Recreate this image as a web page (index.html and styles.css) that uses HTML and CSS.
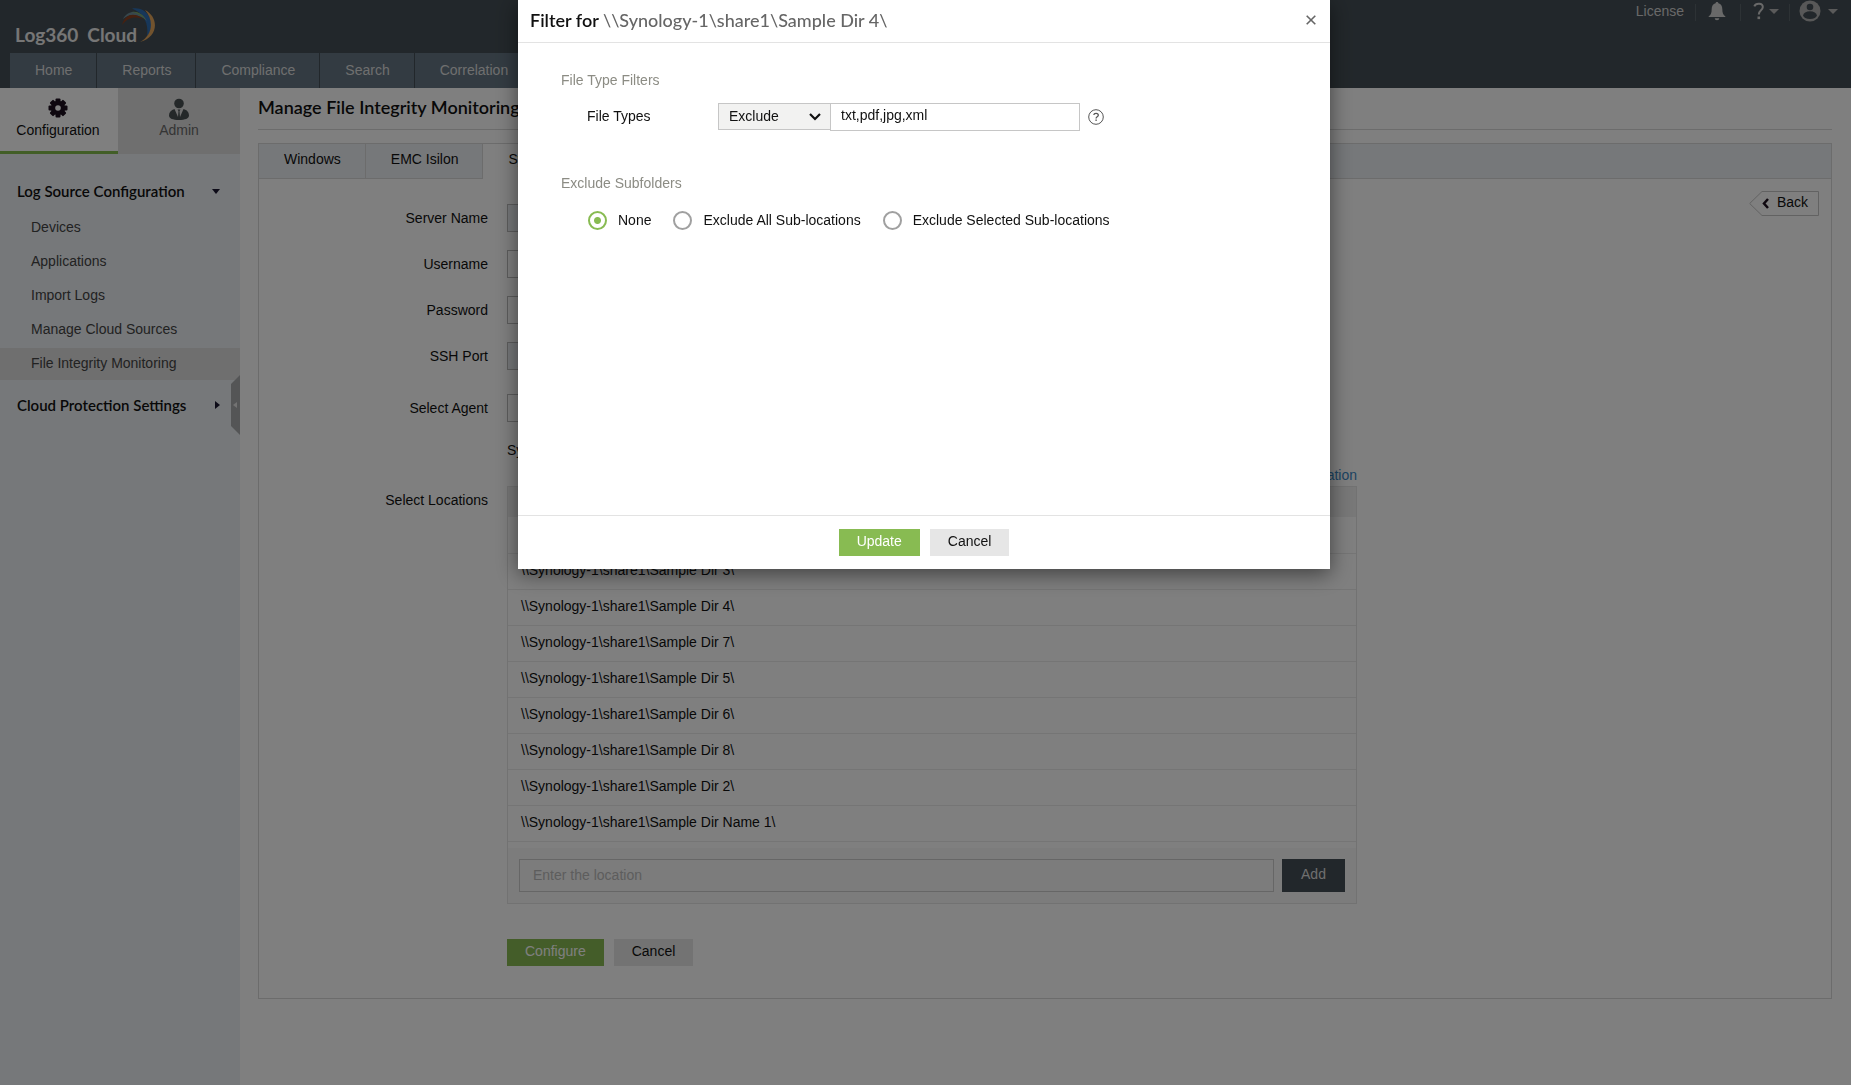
FILE: index.html
```html
<!DOCTYPE html>
<html lang="en">
<head>
<meta charset="utf-8">
<title>Log360 Cloud - Manage File Integrity Monitoring</title>
<link rel="stylesheet" href="styles.css">
</head>
<body>
<header class="header">
  <div class="header-top">
    <a class="logo" href="#" aria-label="Log360 Cloud">
      <span>Log360</span><span>Cloud</span>
      <svg class="logo-arc" width="36" height="36" viewBox="0 0 36 36" fill="none">
        <path d="M11 0.500C20 -1 27 4 30 12C31 20 29 25 26 28C28 14 22 5 11 0.500Z" fill="#2f6fb4"/>
        <path d="M2 11C7 2 18 1 26 13C18 6 9 5 2 11Z" fill="#6f8f9a"/>
        <path d="M11 4C16 3 22 6 25 12C21 8 17 5 11 4Z" fill="#7fae6a"/>
        <path d="M1 17C4 5 14 4 22 11C14 8 7 9 1 17Z" fill="#8c4020"/>
        <path d="M24 2C38 9 38 29 19 34C32 27 33 12 24 2Z" fill="#e5a65c"/>
      </svg>
    </a>
    <div class="header-tools">
      <a class="license" href="#">License</a>
      <button class="tool tool-bell" aria-label="Notifications">
        <svg width="18" height="20" viewBox="0 0 18 20" fill="#d2d2d2"><path d="M9 1c.8 0 1.3.5 1.4 1.2C13 2.8 14.300 5 14.300 8c0 4 1 6 3 7.200V16H.7v-.8C2.700 14 3.700 12 3.700 8c0-3 1.300-5.200 3.900-5.800C7.700 1.500 8.200 1 9 1zM6.700 17.200h4.600a2.300 2 0 0 1-4.600 0z"/></svg>
      </button>
      <button class="tool tool-help" aria-label="Help">
        <svg width="12" height="18" viewBox="0 0 12 18"><path d="M1.300 4.300C2.800.8 9.800.7 9.800 5c0 3.300-4 3.200-4 7.500" fill="none" stroke="#d2d2d2" stroke-width="2"/><rect x="4.500" y="14.500" width="2.600" height="2.600" fill="#d2d2d2"/></svg>
        <span class="caret"></span>
      </button>
      <button class="tool tool-user" aria-label="Account">
        <svg width="22" height="22" viewBox="0 0 22 22"><circle cx="11" cy="11" r="10.500" fill="#b0b0b0"/><circle cx="11" cy="7" r="3.300" fill="#454f56"/><ellipse cx="11" cy="15.200" rx="6.800" ry="3.900" fill="#454f56"/></svg>
        <span class="caret"></span>
      </button>
    </div>
  </div>
  <nav class="nav">
    <a href="#">Home</a><a href="#">Reports</a><a href="#">Compliance</a><a href="#">Search</a><a href="#">Correlation</a>
  </nav>
</header>

<div class="page">
  <aside class="sidebar">
    <div class="side-tabs">
      <a class="side-tab side-tab-active" href="#">
        <svg width="20" height="20" viewBox="0 0 20 20"><g fill="#1c0f1e"><rect x="7.500" y="0.500" width="5" height="19" rx="1"/><rect x="7.500" y="0.500" width="5" height="19" rx="1" transform="rotate(45 10 10)"/><rect x="7.500" y="0.500" width="5" height="19" rx="1" transform="rotate(90 10 10)"/><rect x="7.500" y="0.500" width="5" height="19" rx="1" transform="rotate(135 10 10)"/><circle cx="10" cy="10" r="7.200"/></g><circle cx="10" cy="10" r="2.800" fill="#fff"/></svg>
        <span>Configuration</span>
      </a>
      <a class="side-tab" href="#">
        <svg width="20" height="22" viewBox="0 0 20 22" fill="#485052"><circle cx="10" cy="5.500" r="4.800"/><path d="M5.500 11L9 19l.5-6-1-1.500h3l-1 1.500.5 6 3.500-8c3.500.8 5.500 3.500 5.500 6.500 0 3-4 4.500-10 4.500S0 20.500 0 17.500C0 14.500 2 11.800 5.500 11z"/></svg>
        <span>Admin</span>
      </a>
    </div>
    <nav class="side-nav">
      <button class="side-group">Log Source Configuration <span class="tri tri-down"></span></button>
      <ul class="side-list">
        <li><a href="#">Devices</a></li>
        <li><a href="#">Applications</a></li>
        <li><a href="#">Import Logs</a></li>
        <li><a href="#">Manage Cloud Sources</a></li>
        <li><a class="current" href="#">File Integrity Monitoring</a></li>
      </ul>
      <button class="side-group">Cloud Protection Settings <span class="tri tri-right"></span></button>
    </nav>
    <button class="collapse" aria-label="Collapse sidebar"><svg width="4" height="6" viewBox="0 0 4 6"><path d="M4 0v6L0 3z" fill="#e6e6e6"/></svg></button>
  </aside>

  <main class="main">
    <h1 class="title">Manage File Integrity Monitoring</h1>
    <section class="panel">
      <div class="tabs">
        <a href="#">Windows</a><a href="#">EMC Isilon</a><a class="tab-active" href="#">Synology</a><span class="tabs-rest"></span>
      </div>
      <a class="back" href="#">
        <svg class="back-shape" width="70" height="25" viewBox="0 0 70 25"><path d="M.7 12.500L13 .5h56.500v24H13z" fill="none" stroke="#c4c4c4"/><path d="M19 8l-4 4.500 4 4.500" fill="none" stroke="#1c0f1e" stroke-width="2.500"/></svg>
        <span>Back</span>
      </a>
      <form class="form">
        <label for="server">Server Name</label><input class="field" id="server" type="text" disabled>
        <label for="user">Username</label><input class="field" id="user" type="text">
        <label for="pass">Password</label><input class="field" id="pass" type="password">
        <label for="port">SSH Port</label><input class="field" id="port" type="text" disabled>
        <label for="agent">Select Agent</label><input class="field" id="agent" type="text">
        <p class="hint">Synology</p>
        <label class="loc-label" for="location">Select Locations</label>
        <div class="loc-column">
          <a class="add-link" href="#">Add Location</a>
          <div class="locations">
            <table class="loc-table">
              <thead><tr><th></th></tr></thead>
              <tbody>
                <tr><td></td></tr>
                <tr><td>\\Synology-1\share1\Sample Dir 3\</td></tr>
                <tr><td>\\Synology-1\share1\Sample Dir 4\</td></tr>
                <tr><td>\\Synology-1\share1\Sample Dir 7\</td></tr>
                <tr><td>\\Synology-1\share1\Sample Dir 5\</td></tr>
                <tr><td>\\Synology-1\share1\Sample Dir 6\</td></tr>
                <tr><td>\\Synology-1\share1\Sample Dir 8\</td></tr>
                <tr><td>\\Synology-1\share1\Sample Dir 2\</td></tr>
                <tr><td>\\Synology-1\share1\Sample Dir Name 1\</td></tr>
              </tbody>
            </table>
            <div class="loc-add">
              <input id="location" type="text" placeholder="Enter the location">
              <button type="button">Add</button>
            </div>
          </div>
        </div>
        <div class="actions">
          <button class="btn btn-primary" type="button">Configure</button>
          <button class="btn" type="button">Cancel</button>
        </div>
      </form>
    </section>
  </main>
</div>

<div class="overlay">
  <div class="modal" role="dialog" aria-labelledby="modal-title">
    <div class="modal-head">
      <h2 id="modal-title">Filter for <span>\\Synology-1\share1\Sample Dir 4\</span></h2>
      <button class="close" aria-label="Close"><svg width="10" height="10" viewBox="0 0 10 10"><path d="M.7.7l8.600 8.600M9.300.7L.7 9.300" stroke="#666" stroke-width="1.600"/></svg></button>
    </div>
    <div class="modal-body">
      <h3>File Type Filters</h3>
      <div class="type-row">
        <label for="types">File Types</label>
        <div class="select">
          <select aria-label="Filter mode"><option>Exclude</option><option>Include</option></select>
          <svg width="12" height="8" viewBox="0 0 12 8"><path d="M1 1l5 5 5-5" fill="none" stroke="#111" stroke-width="2.200"/></svg>
        </div>
        <input id="types" type="text" value="txt,pdf,jpg,xml">
        <svg class="help" width="16" height="16" viewBox="0 0 16 16"><circle cx="8" cy="8" r="7.300" fill="none" stroke="#555"/><path d="M5.800 6C6 3.800 10.300 3.800 10.300 6.200c0 1.700-2.200 1.500-2.200 3.300" fill="none" stroke="#555" stroke-width="1.300"/><rect x="7.400" y="10.500" width="1.400" height="1.400" fill="#555"/></svg>
      </div>
      <h3>Exclude Subfolders</h3>
      <div class="radios">
        <label><input type="radio" name="sub" checked>None</label>
        <label><input type="radio" name="sub">Exclude All Sub-locations</label>
        <label><input type="radio" name="sub">Exclude Selected Sub-locations</label>
      </div>
    </div>
    <div class="modal-foot">
      <button class="btn btn-primary">Update</button>
      <button class="btn">Cancel</button>
    </div>
  </div>
</div>
</body>
</html>
```
FILE: styles.css
```css
* { box-sizing: border-box; }

body {
  margin: 0;
  min-height: 100vh;
  display: flex;
  flex-direction: column;
  background: #fff;
  color: #111;
  font: 14px/20px "Liberation Sans", Arial, sans-serif;
}

a { color: inherit; text-decoration: none; }

button, input, select {
  font: inherit;
  color: inherit;
  border: 0;
  border-radius: 0;
  padding: 0;
  margin: 0;
  background: none;
}

h1, h2, h3, p, ul { margin: 0; padding: 0; }
h1, h2, .side-group, .logo { font-family: Lato, sans-serif; }

/* Header */
.header { background: #454f56; }
.header-top { display: flex; justify-content: space-between; height: 53px; }

.logo {
  position: relative;
  display: flex;
  gap: 9px;
  padding: 23px 20px 0 15px;
  color: #ececec;
  font-size: 19px;
  line-height: 24px;
  font-weight: 700;
}
.logo-arc { position: absolute; right: 0; top: 8px; }

.header-tools { display: flex; height: 22px; padding-right: 13px; color: #d2d2d2; }
.license { padding: 1px 11px 0 0; }
.tool {
  display: flex;
  align-items: center;
  gap: 4px;
  position: relative;
  padding: 0 14px 0 13px;
}
.tool::before {
  content: "";
  position: absolute;
  left: 0;
  top: 4px;
  width: 1px;
  height: 17px;
  background: #5b656b;
}
.tool-help { padding-right: 10px; }
.tool-user { padding: 0 0 0 10px; gap: 7px; }
.caret {
  border: 5px solid transparent;
  border-top-color: #b4b4b4;
  border-bottom: 0;
}

.nav { display: flex; padding-left: 10px; }
.nav a {
  padding: 7px 24px 8px 25px;
  background: #667785;
  color: #dedede;
  margin-right: 1px;
}

/* Sidebar */
.page { display: flex; flex: 1; }
.sidebar { position: relative; width: 240px; flex: none; background: #ecf0f4; }
.side-tabs { display: flex; height: 66px; }
.side-tab {
  flex: 1;
  display: flex;
  flex-direction: column;
  align-items: center;
  justify-content: space-between;
  padding: 10px 0 14px;
  background: #dedede;
  color: #6a6a6a;
}
.side-tab-active {
  flex: 0 0 118px;
  padding: 10px 2px 11px 0;
  background: #fff;
  color: #111;
  border-bottom: 3px solid #84bc4f;
}
.side-nav { padding-top: 23px; }
.side-group {
  display: flex;
  align-items: center;
  justify-content: space-between;
  width: 100%;
  height: 28px;
  padding: 0 20px 0 17px;
  font-size: 15px;
  font-weight: 600;
}
.tri { border: 4px solid transparent; }
.tri-down { border-top: 5px solid #1b1730; border-bottom: 0; }
.tri-right { border-left: 5px solid #1b1730; border-right: 0; }
.side-list {
  list-style: none;
  display: grid;
  gap: 2px;
  padding: 7px 0 11px;
  color: #444;
}
.side-list a { display: block; padding: 5px 31px 7px; }
.side-list .current { background: #dedede; }
.collapse {
  position: absolute;
  right: 0;
  top: 287px;
  width: 9px;
  height: 60px;
  background: #a9abad;
  clip-path: polygon(0 9px, 100% 0, 100% 100%, 0 51px);
  display: grid;
  place-items: center end;
  padding-right: 3px;
}

/* Main */
.main { flex: 1; padding: 0 19px 40px 18px; }
.title {
  padding: 7px 0 10px;
  border-bottom: 1px solid #d8d8d8;
  font-size: 18px;
  line-height: 24px;
  font-weight: 600;
}
.panel { position: relative; margin-top: 13px; border: 1px solid #d8d8d8; }
.tabs { display: flex; }
.tabs a, .tabs-rest {
  padding: 5px 24px 9px 25px;
  background: #ecf0f4;
  border-right: 1px solid #d8d8d8;
  border-bottom: 1px solid #d8d8d8;
}
.tabs .tab-active { background: #fff; border-bottom-color: #fff; }
.tabs-rest { flex: 1; border-right: 0; }
.back {
  position: absolute;
  right: 12px;
  top: 47px;
  width: 70px;
  padding: 1px 11px 3px 28px;
}
.back-shape { position: absolute; left: 0; top: 0; }

.form {
  display: grid;
  grid-template-columns: 229px 850px;
  column-gap: 19px;
  row-gap: 18px;
  align-items: center;
  padding: 25px 0 32px;
}
.form > label { text-align: right; }
.field { width: 380px; height: 28px; border: 1px solid #bbb; padding: 0 10px; }
.field:disabled { background: #ecf0f4; }
.form > label[for="agent"], #agent { margin-top: 6px; }
.hint { grid-column: 2; }
.form > .loc-label { align-self: start; margin-top: 12px; }
.loc-column { margin-top: -13px; }
.add-link { display: block; width: fit-content; margin: 0 0 1px auto; color: #3a86c4; }
.locations { border: 1px solid #e4e4e4; }
.loc-table { width: 100%; border-collapse: collapse; margin-bottom: 6px; }
.loc-table th { height: 30px; padding: 0; background: #f0f0f0; }
.loc-table td { height: 36px; padding: 0 13px 2px; border-bottom: 1px solid #ebebeb; }
.loc-add { display: flex; gap: 8px; padding: 11px; background: #f8f8f8; }
.loc-add input { flex: 1; height: 33px; padding: 0 13px; border: 1px solid #ccc; }
.loc-add input::placeholder { color: #bbb; opacity: 1; }
.loc-add button { width: 63px; padding-bottom: 3px; background: #454f56; color: #dedede; }
.actions { grid-column: 2; display: flex; gap: 10px; padding-top: 17px; }

.btn { height: 27px; padding: 0 18px 3px; background: #e6e6e6; }
.btn-primary { background: #88bb52; color: #fff; }

/* Dialog */
.overlay {
  position: fixed;
  inset: 0;
  display: flex;
  justify-content: center;
  align-items: flex-start;
  padding-right: 3px;
  background: rgba(0, 0, 0, .5);
}
.modal { width: 812px; background: #fff; box-shadow: 0 5px 20px rgba(0, 0, 0, .5); }
.modal-head {
  display: flex;
  align-items: center;
  justify-content: space-between;
  height: 43px;
  padding: 0 14px 3px 12px;
  border-bottom: 1px solid #e3e3e3;
}
.modal-head h2 { font-size: 18px; line-height: 24px; font-weight: 600; }
.modal-head span { color: #666; font-weight: 500; }
.close { display: flex; }
.modal-body { min-height: 472px; padding: 27px 43px; }
.modal-body h3 { color: #8c8c84; font-size: 14px; font-weight: 400; }
.type-row { display: flex; align-items: flex-start; padding: 13px 0 42px 26px; }
.type-row label { width: 131px; padding-top: 3px; }
.select { position: relative; width: 112px; }
.select select {
  appearance: none;
  width: 100%;
  height: 27px;
  padding: 0 30px 1px 10px;
  border: 1px solid #c6c6c6;
  border-right: 0;
  background: #f2f2f1;
}
.select svg { position: absolute; right: 9px; top: 10px; }
.type-row input { width: 250px; height: 28px; padding: 0 10px 4px; border: 1px solid #c6c6c6; }
.help { margin: 6px 0 0 8px; }
.radios { display: flex; gap: 22px; padding: 17px 0 0 27px; }
.radios label { display: flex; align-items: center; gap: 11px; }
.radios input {
  appearance: none;
  width: 19px;
  height: 19px;
  border: 2px solid #a0a0a0;
  border-radius: 50%;
}
.radios input:checked {
  border-color: #88bb52;
  background: radial-gradient(circle, #88bb52 3px, transparent 4px);
}
.modal-foot {
  display: flex;
  justify-content: center;
  gap: 10px;
  padding: 13px 0;
  border-top: 1px solid #e3e3e3;
}
```
